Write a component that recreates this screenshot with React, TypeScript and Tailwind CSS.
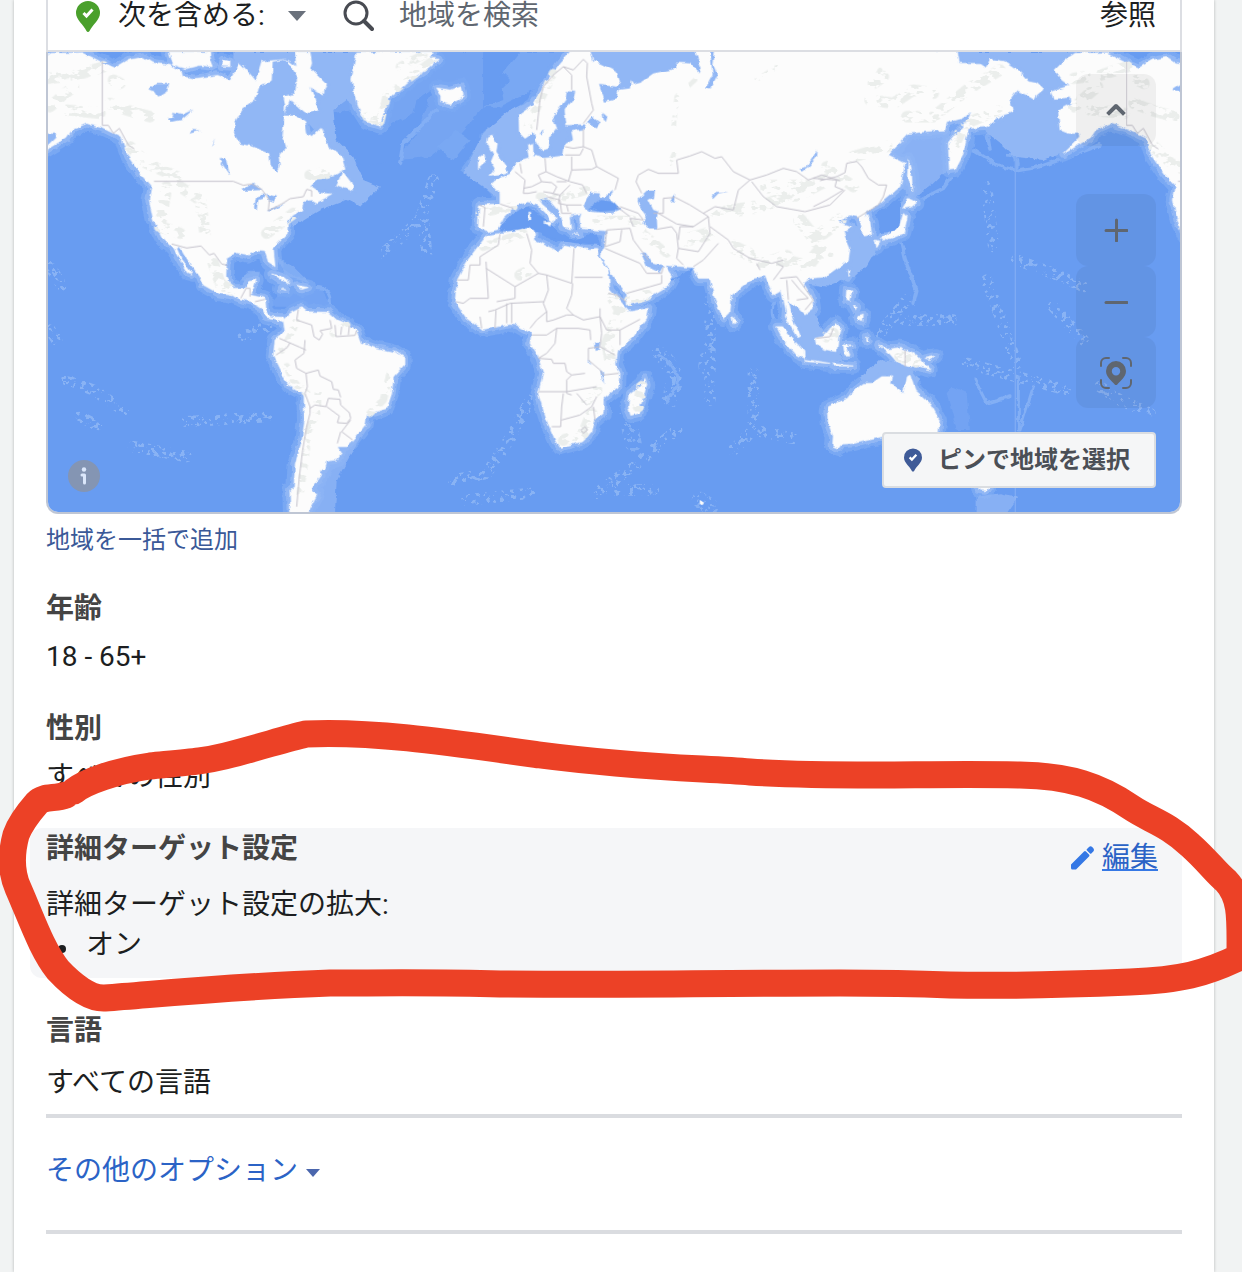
import { useState } from "react";

// Map units are a third of a pixel; one full turn of the globe is 3072 units.
const WORLD_WIDTH = 3072;

const MapShapes = () => (
  <defs>
    <filter id="rough" x="-5%" y="-5%" width="110%" height="110%">
      <feTurbulence type="fractalNoise" baseFrequency="0.045" numOctaves="3" seed="4" result="noise" />
      <feDisplacementMap in="SourceGraphic" in2="noise" scale="14" xChannelSelector="R" yChannelSelector="G" />
    </filter>
    <filter id="speckle" x="-5%" y="-5%" width="110%" height="110%">
      <feTurbulence type="fractalNoise" baseFrequency="0.03 0.05" numOctaves="3" seed="11" result="noise" />
      <feColorMatrix in="noise" type="matrix" values="0 0 0 0 0  0 0 0 0 0  0 0 0 0 0  14 0 0 0 -6.9" result="holes" />
      <feComposite in="SourceGraphic" in2="holes" operator="in" />
    </filter>
    <filter id="dots" x="-5%" y="-5%" width="110%" height="110%">
      <feTurbulence type="fractalNoise" baseFrequency="0.07" numOctaves="3" seed="7" result="noise" />
      <feColorMatrix in="noise" type="matrix" values="0 0 0 0 0  0 0 0 0 0  0 0 0 0 0  18 0 0 0 -10.2" result="holes" />
      <feComposite in="SourceGraphic" in2="holes" operator="in" />
    </filter>

    <g id="land" strokeLinejoin="round">
      {/* North and Central America */}
      <path d="M123 180 153 160 248 158 300 184 345 204 385 180 430 172 455 188 510 196 540 212 545 230 585 236 650 226 692 242 708 210 720 190 735 205 767 242 785 185 815 182 860 178 890 200 885 156 930 156 935 190 930 205 980 255 968 285 930 260 955 330 920 340 870 300 850 345 885 345 915 365 920 400 935 412 962 385 985 440 1025 470 1035 505 1000 528 960 530 930 560 960 580 998 582 950 608 935 600 910 605 905 630 880 645 862 665 862 700 820 745 825 800 805 785 795 755 770 752 745 765 710 758 680 775 678 830 700 865 735 865 745 845 768 840 760 865 750 885 795 895 798 930 812 950 850 952 850 965 820 955 800 952 780 920 755 905 725 898 690 885 655 880 610 855 600 830 570 790 540 740 530 745 545 780 576 822 562 818 520 745 485 712 460 660 448 600 455 560 420 520 385 470 365 412 310 385 260 370 215 390 200 412 118 462 170 410 168 400 133 400 108 390 103 330 140 310 138 292 88 295 83 275 138 258 113 240 93 210Z" />
      <path d="M508 156 628 156 632 178 640 200 600 196 560 206 520 195Z M668 180 690 185 690 200 665 198Z M778 280 800 295 822 308 800 320 775 305Z M1010 555 1028 515 1058 555 1056 572Z M940 235 975 250 975 280 950 260Z" />
      {/* Greenland and Iceland */}
      <path d="M1070 156 1055 240 1072 320 1100 365 1140 378 1150 340 1165 290 1185 280 1230 240 1270 215 1315 178 1285 172 1300 156Z M1310 264 1350 270 1385 260 1390 288 1352 314 1325 305 1325 288Z" />
      <path d="M815 822 850 832 870 848 845 842Z M892 856 925 862 905 868Z M842 866 858 870Z" />
      {/* South America */}
      <path d="M850 960 855 995 825 1020 820 1070 845 1120 865 1155 912 1180 914 1260 905 1330 886 1390 882 1460 870 1470 872 1545 918 1545 950 1485 935 1465 965 1425 955 1408 975 1408 980 1383 1010 1380 1025 1360 1012 1340 1040 1340 1060 1320 1095 1275 1100 1245 1160 1225 1175 1180 1180 1130 1212 1095 1212 1072 1190 1058 1130 1045 1082 1028 1070 995 1045 975 1010 960 985 937 920 935 905 923 870 940Z" />
      {/* Eurasia */}
      <path d="M1715 150 1680 190 1640 245 1600 315 1557 345 1558 395 1575 412 1600 395 1612 430 1625 450 1645 445 1650 410 1670 385 1657 350 1695 300 1700 272 1727 275 1720 300 1695 330 1700 375 1760 372 1750 388 1715 395 1720 420 1695 435 1690 468 1630 475 1600 468 1598 430 1585 435 1590 475 1550 488 1530 520 1475 550 1500 580 1500 612 1438 615 1435 680 1462 695 1495 688 1510 655 1545 620 1585 605 1610 612 1640 642 1658 668 1668 652 1625 615 1615 590 1640 592 1678 635 1690 682 1712 690 1708 648 1745 640 1740 655 1742 685 1790 690 1820 692 1815 740 1803 765 1840 830 1880 880 1882 915 1935 900 2000 860 2018 828 1995 795 1980 820 1940 800 1920 755 1938 758 1955 785 1995 796 2050 800 2080 802 2095 835 2130 835 2145 900 2170 955 2190 935 2195 885 2260 835 2295 828 2320 885 2345 870 2358 930 2356 950 2390 1010 2400 1005 2378 960 2362 905 2395 925 2415 945 2440 925 2435 890 2410 850 2430 835 2475 830 2510 805 2545 780 2550 745 2530 700 2555 680 2515 665 2550 645 2578 652 2590 708 2615 705 2610 665 2595 635 2635 615 2700 560 2715 490 2665 465 2725 400 2805 392 2835 390 2840 368 2885 355 2915 337 2900 365 2845 430 2848 510 2865 508 2890 460 2905 385 2960 380 3010 345 3038 335 3028 300 3050 270 3080 285 3105 300 3110 285 3130 268 3110 250 3085 245 3060 215 3015 185 2970 178 2960 205 2940 190 2875 190 2868 150Z" />
      {/* Africa and Madagascar */}
      <path d="M1462 706 1500 700 1585 685 1602 692 1605 720 1675 755 1690 735 1760 748 1790 745 1795 765 1825 815 1830 870 1880 925 1890 935 1945 925 1940 955 1900 1010 1850 1055 1845 1090 1857 1120 1855 1160 1810 1195 1810 1240 1785 1260 1775 1295 1745 1325 1680 1342 1668 1325 1640 1260 1615 1180 1630 1120 1615 1070 1590 1030 1595 1000 1550 975 1530 973 1445 988 1400 955 1365 905 1372 840 1400 785 1430 745Z M1935 1135 1940 1155 1915 1240 1892 1246 1885 1220 1890 1180 1920 1160Z" />
      {/* British Isles and Mediterranean islands */}
      <path d="M1465 410 1480 405 1478 425 1492 430 1488 455 1520 500 1518 518 1470 526 1485 508 1472 488 1482 465 1462 432Z M1435 475 1452 462 1458 485 1435 506Z M1586 640 1592 640 1592 658 1586 658Z M1630 668 1655 666 1650 678Z M1720 702 1738 702Z" />
      {/* Japan, Sakhalin, Taiwan, Philippines */}
      <path d="M2725 595 2750 608 2732 622 2708 625Z M2710 640 2722 652 2710 700 2675 715 2640 716 2665 700 2698 682Z M2625 720 2640 724 2630 740Z M2645 718 2660 716 2652 724Z M2725 480 2735 530 2738 575 2722 530Z M2542 815 2550 812 2544 830Z M2540 870 2555 875 2550 905 2538 900Z M2570 950 2590 945 2588 965 2572 960Z M2560 915 2572 920 2568 930Z" />
      {/* South-east Asia and New Guinea */}
      <path d="M2330 980 2345 980 2412 1055 2413 1075 2390 1065 2350 1020Z M2415 1078 2490 1090 2415 1084Z M2445 1015 2470 1010 2505 970 2522 985 2515 1010 2510 1055 2480 1050 2450 1035Z M2530 1035 2555 1035 2540 1045 2550 1065 2535 1065Z M2635 1035 2665 1048 2700 1042 2750 1065 2790 1110 2755 1100 2725 1100 2690 1085 2668 1060Z M2500 1092 2560 1098 2500 1098Z M2195 950 2208 960 2200 972Z M2600 1010 2606 1022 2600 1024Z M2775 1075 2805 1068 2790 1078Z" />
      {/* Australia and New Zealand */}
      <path d="M2482 1235 2485 1220 2545 1195 2565 1170 2590 1150 2615 1150 2645 1130 2675 1130 2670 1150 2710 1180 2722 1130 2730 1125 2745 1170 2790 1210 2818 1260 2815 1300 2790 1325 2645 1310 2565 1330 2525 1332 2515 1345 2498 1338 2500 1310 2485 1270Z M2935 1460 2970 1460 2955 1472 2938 1470Z" />
    </g>

    {/* Seas and lakes that lie inside the land outlines */}
    <g id="inland">
      <path d="M705 365 730 325 765 300 780 255 815 245 818 185 860 178 892 230 885 280 850 290 855 315 848 410 858 440 838 465 842 495 832 515 812 500 808 460 760 440 722 430 702 400Z" />
      <path d="M445 268 470 252 508 252 500 275 475 290 465 275Z M500 355 525 352 515 338 545 345 580 328 545 360 515 366Z M565 402 580 390 602 392Z M632 438 645 415 638 432Z M655 475 676 472 690 525 672 500Z M725 572 760 548 790 570 745 572Z M768 590 800 582 790 595 775 600 770 632 762 625Z M800 582 828 590 822 605 805 600Z M800 632 860 608 840 620 812 634Z M545 634 554 640Z" />
      <path d="M1770 150 1780 185 1800 190 1850 215 1860 245 1850 260 1797 255 1815 305 1850 298 1855 270 1890 265 1892 240 1900 252 1925 245 1960 220 2032 205 2030 188 2070 190 2098 220 2105 205 2085 150Z M2130 150 2145 150 2140 195 2152 225 2132 265 2118 262 2138 225Z" />
      <path d="M1760 368 1775 350 1800 368 1790 382 1775 378Z M1805 335 1822 350 1818 365 1808 360Z" />
      <path d="M1750 620 1770 578 1800 580 1798 590 1812 592 1840 572 1830 595 1865 630 1840 640 1770 635Z" />
      <path d="M1912 600 1940 572 1965 572 1962 592 1945 600 1960 630 1975 635 1970 650 1972 685 1945 685 1930 670 1940 650 1918 620Z" />
      <path d="M2398 508 2420 500 2440 470 2450 450 2448 475 2425 500 2408 512Z M2010 602 2018 590 2025 580 2022 605Z M2138 590 2148 576 2185 576 2155 580 2142 594Z" />
      <path d="M1782 1030 1800 1028 1798 1045 1784 1050Z M1800 1110 1808 1115 1812 1150 1806 1140Z M1762 1075 1775 1095 1768 1090Z M1618 402 1630 392 1630 402Z" />
    </g>

    <g id="borders" fill="none" strokeLinejoin="round">
      <path d="M307 184V376L325 376 340 400 358 385 385 435 403 447 M462 544H700L730 556 755 552 785 568 808 600 805 632 845 612 870 596 910 590 920 568 935 572 935 590 M515 732 560 744 603 738 628 765 642 760 665 792 682 796 M722 895 738 865 750 865 750 890 M765 905 795 898" />
      <g transform="translate(0 780)">
        <path d="M895 148 890 180 935 195 942 230 958 240 968 222 960 212 995 205 990 180 M1005 195 1008 230 1065 226 1070 212 M1025 200 1022 225 M1048 198 1045 225 M915 240 912 280 885 300 890 325 918 340 955 330 960 348 995 365 1000 388 1015 390 1022 412 M838 235 900 262 918 270 M828 285 862 262 870 248 M918 340 922 380 915 400 930 440 930 460 920 500 908 570 898 650 890 740 M930 445 945 435 978 440 985 415 1020 418 1022 435 1048 458 1052 475 1040 490 1012 488 1018 468 980 440 M1022 515 1012 550 M1052 480 1025 515 1058 540" />
      </g>
      <g transform="translate(1200 0)">
        <path d="M410 390 420 300 430 260 460 225 490 200 520 210 550 178 562 190 560 230 575 310 580 330 550 370 M490 200 515 225 515 270 M550 388 550 440 520 445 495 440 M550 440 575 450 590 500 655 535 645 570 M515 470 515 510 575 508 590 500 M495 465 540 465 550 445 M515 510 505 545 M435 475 438 515 470 530 510 545 548 555 560 580 M438 515 415 525 425 545 395 560 370 565 M345 515 375 540 370 580 385 580 410 575 M360 490 365 520 M425 545 455 548 470 560 460 580 430 575 M455 580 480 585 510 555 M480 585 475 610 500 615 545 615 M440 590 480 600 485 640 515 640 M238 615 255 622 250 680 M300 612 340 625 M470 545 500 545 M500 615 505 635" />
        <path d="M725 580 708 545 715 525 745 508 775 520 835 520 830 480 870 468 905 455 945 475 965 470 1000 515 1050 540 1015 570 1000 630 945 620 910 640 M790 640 790 595 825 592 870 615 910 640 925 650 880 680 840 680 835 720 M775 640 830 672 880 680 M1050 540 1100 525 1150 505 1190 515 1225 540 1265 525 1320 542 M1055 545 1090 590 1130 620 1215 635 1290 615 1335 570 M660 620 715 640 730 660 690 655 700 680 M620 690 690 685 700 720 745 780 M620 690 615 740 660 725 665 690 M650 620 690 650 M770 688 815 680 830 700 835 745 830 775 850 795 M835 745 895 755 930 700 925 650 M880 800 910 780 955 730 M930 680 985 720 1000 745 1050 775 1115 790 1150 780 M1070 790 1080 810 M760 640 790 640" />
        <path d="M300 702 295 735 240 770 240 795 210 795 205 840 172 840 M258 785 265 895 210 895 M258 805 345 860 345 895 290 905 M345 860 415 820 390 790 395 750 380 700 M415 820 440 825 515 850 522 745 M524 832H608 M440 825 445 870 430 910 440 935 440 965 460 960 500 945 520 945 550 960 600 950 600 925 M518 850 515 885 500 925 520 945 M625 880 650 885 680 905 M600 950 620 990 660 990 720 958 M660 990 660 1035 M600 1040 645 1065 M600 950 605 1000 600 1040 565 1045 565 1080 600 1110 610 1125 655 1120 M395 1005 440 1005 470 985 535 985 570 990 572 1020 M470 985 465 1030 440 1060 415 1075 455 1078 460 1090 495 1090 500 1115 515 1125 500 1140 500 1180 515 1185 M415 1175H500L590 1160 M490 1180 485 1220 482 1280 455 1280 M485 1260 540 1245 575 1220 590 1190 M530 1180 560 1215 M580 1220 585 1260 M543 1290 555 1280 562 1290 550 1300Z M515 1125 555 1120 M335 910 335 970 M320 910 320 970 M288 930 285 985 M240 950 245 985 M210 895 190 910 168 905 M265 935 285 930 330 910 430 905 M440 935 410 960 390 985 M680 880 750 860 785 850 785 825 M615 745 720 790 740 820 785 820 790 800" />
        <path d="M1130 790 1150 800 1120 840 M1140 835 1190 830 1240 900 1215 930 M1160 840 1165 900 M1190 900 1225 895 M1175 840 1200 870 1225 895" />
      </g>
      <path d="M2440 535 2510 540 2505 560 2530 570 2480 600 2440 620 M2460 542 2510 530 2535 518 2540 490 2570 484 2585 500 2605 535 2635 555 2660 555 2650 590 2635 615 2570 655 M2715 1050V1100 M2448 1015 2490 1010 2500 985" />
    </g>

    <g id="relief" fill="none" strokeLinecap="round" strokeLinejoin="round">
      <path strokeWidth="34" d="M150 235 230 225 310 200 M200 330 300 340 M150 320 220 260 M330 310 380 330 450 350 M390 440 440 490 530 530 M500 560 480 680 540 700 M540 560 600 600 615 700 M640 790 660 850 690 870 M800 700 880 640 M930 525 980 520 M340 240 360 250" />
      <path strokeWidth="22" d="M890 960 870 1010 845 1050 M860 1100 885 1150 920 1180 M955 1180 950 1240 925 1290 915 1380 900 1480 M1170 1120 1150 1200 1110 1240 M1040 975 1000 1000" />
      <path strokeWidth="26" d="M1100 350 1140 365 1160 290 1220 240 1300 180 M1270 165 1200 200 M1660 220 1620 300 1580 390 M1620 590 1700 590 1760 570 M1440 640 1540 620 M1450 740 1570 700 M1790 660 1900 660 1930 700 2000 760" />
      <path strokeWidth="14" d="M2085 240 2030 290 2020 390 M2010 490 2025 455 M2270 240 2330 200 M2620 250 2640 210" />
      <path strokeWidth="40" d="M2140 640 2280 620 2400 580 2480 540 M2200 740 2300 790 2360 770 M2350 780 2420 800 2460 750 M2060 720 2130 700 M2300 560 2440 560 M2400 660 2480 760 M2440 720 2520 660" />
      <path strokeWidth="34" d="M2610 300 2680 310 2740 270 2800 280 M2720 350 2800 350 2900 270 3000 210 M2620 250 2650 230 M2560 470 2660 440 M2480 500 2560 560 M2860 440 2880 400 M2900 370 2990 330" />
      <path strokeWidth="34" d="M1835 890 1860 930 1840 980 1820 1030 1830 1080 M1690 1320 1750 1300 1775 1240 M1760 1200 1790 1170 M1925 1160 1915 1220 M1890 900 1940 885 M2700 1070 2750 1085 M1560 825 1580 815 M2480 1010 2500 1000" />
    </g>

    <g id="shelf" strokeLinejoin="round" strokeLinecap="round">
      <path d="M700 156H1080L1060 250 1080 330 1040 300 1000 330 1010 420 1060 470 1090 540 1140 560 1110 590 1080 620 1040 600 960 630 910 660 880 680 860 640 940 560 1020 480 900 340 700 300Z" />
      <path d="M1390 520 1430 440 1450 400 1530 330 1600 300 1720 260 1760 380 1700 500 1540 520 1500 600 1450 560Z" />
      <path d="M60 156H150V440L60 480-30 470-60 440-200 330-230 250-250 156Z" />
      <path d="M2665 465 2725 390 2850 380 2850 500 2800 550 2740 600 2700 560Z" fillOpacity="0.8" />
      <path d="M2515 660 2620 700 2640 730 2600 800 2560 830 2480 860 2420 850 2520 770Z" />
      <path d="M2360 900 2440 930 2470 1000 2530 1080 2420 1085 2340 1000Z M2580 1130 2640 1080 2720 1090 2760 1140 2720 1200 2600 1180Z" />
      <path d="M930 1540 1005 1540 1010 1440 1060 1350 1120 1260 1040 1340 960 1420Z M2930 1540 2930 1490 3000 1480 3055 1490 3020 1540Z" fillOpacity="0.75" />
      <path d="M720 840 745 815 780 815 770 850Z M830 770 880 800 930 850 860 830Z" fillOpacity="0.6" />
    </g>

    {/* Ocean ridges */}
    <g id="ridges" fill="none" strokeLinecap="round" strokeLinejoin="round">
      <path strokeWidth="34" d="M1150 760 1260 660 1300 540 M1270 660 1280 760 M200 1140 280 1170 370 1230 M400 1340 560 1370 M560 1265 800 1250 M730 1010 800 980 M1360 1440 1460 1420 1540 1300 1590 1200 M1400 1500 1590 1480 M1790 1480 1900 1400 2030 1290 M2200 1350 2260 1290 2380 1315 M2260 1120V1280 M1980 1060 2030 1120 2010 1200 M1840 1470 1960 1470 M2130 1200 2130 900 M3050 780 3160 820 3250 860 M2960 840 3000 950 3050 1090 M2960 560 2980 740 M2700 960 2860 960 M2640 1000 2720 900 M3160 920 3250 1020 M3300 1160 3360 1200 3450 1240 M2900 1090 3200 1170 M150 800 185 855 M150 990 170 1020 M240 1250 290 1275" />
      <path strokeWidth="50" d="M1980 1060 2030 1120 2010 1200 M1880 1240 1900 1330 M2120 1080V1100 M2100 1500 2130 1520" strokeOpacity="0.8" />
    </g>
  </defs>
);

const WorldMap = () => (
  <svg viewBox="144 156 3396 1380" preserveAspectRatio="xMidYMid slice" className="block h-[460px] w-full" role="img" aria-label="世界地図">
    <MapShapes />
    <rect x="0" y="0" width="3700" height="1700" fill="#689cf1" />
    <g fill="#79a8f3" filter="url(#rough)">
      <path d="M930 156H1450V320L1380 400 1290 470 1200 480 1250 340 1180 370 1140 410 1080 390 1000 340 960 220Z" fillOpacity="0.8" />
      <path d="M1450 156 1720 156 1600 270 1500 320 1450 320 1530 240Z" />
      <path d="M1310 440 1370 390 1410 420 1360 480Z M1380 510 1440 430 1530 560 1500 600Z" />
      <path d="M800 920 860 850 960 860 1000 930 900 920Z" fillOpacity="0.7" />
      <path d="M2855 1160 2840 1180 2870 1290 2910 1290 2900 1180Z" fillOpacity="0.6" />
    </g>
    <path d="M1450 156 1560 156 1500 230 1510 300 1450 320Z M1000 340 1060 330 1130 400 1240 340 1250 300 1300 260 1250 400 1190 480 1090 500 1010 420Z" fill="#689cf1" filter="url(#rough)" />
    <g filter="url(#dots)" stroke="#9cc0f7" opacity="0.65">
      <use href="#ridges" />
    </g>
    <g fill="none" stroke="#83aff5" strokeLinecap="round" strokeWidth="11" filter="url(#rough)">
      <path d="M2920 450 2990 495 3050 512 3120 500 3220 465 3300 435 M3022 465Q3055 460 3050 500 M2740 610 2830 565 2870 510 M2700 715 2715 780 2750 870 2740 910 M2960 390 2970 450" />
      <path d="M1975 1065Q2040 1100 2030 1160L2000 1205 M930 865Q1000 850 990 930 M2925 1140 2960 1210 3030 1190 M3055 1130V1290 M3100 1160 3060 1290 M2330 890Q2290 960 2370 1010L2430 1080" strokeWidth="9" />
      <path d="M1200 490 1210 430 1260 380 1310 330" strokeWidth="12" />
    </g>
    <path d="M3046 200V1540" stroke="#7fabf4" strokeWidth="4" />

    <g filter="url(#rough)">
      {[0, WORLD_WIDTH].map((x) => (
        <use key={x} href="#land" x={x} fill="none" stroke="#79a8f3" strokeWidth="46" />
      ))}
      {[0, WORLD_WIDTH].map((x) => (
        <use key={x} href="#shelf" x={x} fill="#91b7f5" />
      ))}
      {[0, WORLD_WIDTH].map((x) => (
        <use key={x} href="#land" x={x} fill="none" stroke="#91b7f5" strokeWidth="24" />
      ))}
      <path d="M1490 690 1540 640 1580 620 1640 660 1680 700 1720 720 1790 700 1800 735 1690 725 1620 700Z" fill="#689cf1" />
      <path d="M2630 640 2700 600 2700 690 2640 700Z M2080 806 2070 825 1990 850Z" fill="#689cf1" />
    </g>
    <g filter="url(#rough)">
      {[0, WORLD_WIDTH].map((x) => (
        <use key={x} href="#land" x={x} fill="#fcfcfc" stroke="#fcfcfc" strokeWidth="2" />
      ))}
      {[0, WORLD_WIDTH].map((x) => (
        <use key={x} href="#inland" x={x} fill="#91b7f5" />
      ))}
      <path d="M1765 625 1800 600 1840 605 1862 630 1800 635Z" fill="#689cf1" />
    </g>
    <g filter="url(#speckle)" stroke="#ebeeec">
      <use href="#relief" />
      <use href="#relief" x={WORLD_WIDTH} />
    </g>
    <g stroke="#c3c1cb" strokeWidth="3">
      <use href="#borders" />
      <use href="#borders" x={WORLD_WIDTH} />
    </g>
    <path d="M2099 1500 2104 1503 2112 1508 2106 1516 2100 1512Z" fill="#fcfcfc" />
  </svg>
);

const mapButton = "flex w-20 items-center justify-center rounded-xl bg-black/5 text-[#5f6670]";

const MapControls = () => (
  <div className="absolute top-[22px] right-6 flex flex-col">
    <button type="button" aria-label="閉じる" className={`${mapButton} mb-12 h-[72px]`}>
      <svg width="20" height="14" viewBox="0 0 20 14" fill="none" stroke="currentColor" strokeWidth="4" strokeLinecap="square" strokeLinejoin="round">
        <path d="M3 10l7-7 7 7" />
      </svg>
    </button>
    <button type="button" aria-label="拡大" className={`${mapButton} h-[72px]`}>
      <svg width="24" height="24" viewBox="0 0 24 24" fill="none" stroke="currentColor" strokeWidth="3" strokeLinecap="round">
        <path d="M12.500 2v21M2 12.500h21" />
      </svg>
    </button>
    <button type="button" aria-label="縮小" className={`${mapButton} h-[71px]`}>
      <svg width="24" height="24" viewBox="0 0 24 24" fill="none" stroke="currentColor" strokeWidth="3" strokeLinecap="round">
        <path d="M2 12.500h21" />
      </svg>
    </button>
    <button type="button" aria-label="現在地" className={`${mapButton} h-[71px]`}>
      <svg width="32" height="32" viewBox="0 0 32 32">
        <g fill="none" stroke="currentColor" strokeWidth="2" strokeLinecap="round">
          <path d="M1 9V6a5 5 0 0 1 5-5h3M23 1h3a5 5 0 0 1 5 5v3M31 23v3a5 5 0 0 1-5 5h-3M9 31H6a5 5 0 0 1-5-5v-3" />
        </g>
        <path fill="currentColor" fillRule="evenodd" d="M16 4a10 10 0 0 0-10 10c0 6 6 10 8.500 13.200a2 2 0 0 0 3 0C20 24 26 20 26 14A10 10 0 0 0 16 4zm0 6a4.200 4.200 0 1 1 0 8.400 4.200 4.200 0 0 1 0-8.400z" />
      </svg>
    </button>
  </div>
);

const PinIcon = ({ className }: { className: string }) => (
  <svg viewBox="0 0 24 31" className={className}>
    <path fill="currentColor" d="M12 0A12 12 0 0 0 0 12c0 7 7.500 11.500 10.500 18a1.700 1.700 0 0 0 3 0C16.500 23.500 24 19 24 12A12 12 0 0 0 12 0z" />
    <path d="M7.500 12l3 3L16.500 8.500" fill="none" stroke="#fff" strokeWidth="3" />
  </svg>
);

const Heading = ({ children }: { children: string }) => (
  <h3 className="text-[28px] leading-10 font-bold text-[#444444]">{children}</h3>
);

const App = () => {
  const [query, setQuery] = useState("");

  return (
    <div className="relative min-h-screen overflow-hidden bg-[#f1f3f3] pr-7 pl-3.5 font-[Roboto,'Noto_Sans_CJK_JP',sans-serif] text-[28px] leading-10 text-[#1c1e21]">
      <main className="min-h-screen bg-white px-8 shadow-[0_0_3px_rgba(0,0,0,0.25)]">
        <div className="flex h-[52px] items-center border-x-2 border-b-2 border-[#dcdee3] pr-6 pb-[18px] pl-7">
          <PinIcon className="h-[31px] w-6 shrink-0 text-[#4aa02c]" />
          <div className="relative ml-[18px] flex shrink-0 items-center">
            <select aria-label="地域の条件" className="h-8 w-[190px] appearance-none bg-transparent leading-8 outline-none">
              <option>次を含める:</option>
            </select>
            <svg viewBox="0 0 18 10" className="pointer-events-none absolute right-0.5 h-2.5 w-[18px] fill-[#6a717c]">
              <path d="M0 0h18l-9 10z" />
            </svg>
          </div>
          <label htmlFor="region" className="ml-[34px] shrink-0">
            <svg viewBox="0 0 32 32" className="h-8 w-8 fill-none stroke-[#484b52]" aria-label="検索">
              <circle cx="14" cy="13" r="11" strokeWidth="3" />
              <path d="M22 21l8 8" strokeWidth="4" strokeLinecap="round" />
            </svg>
          </label>
          <input
            id="region"
            type="text"
            value={query}
            onChange={(e) => setQuery(e.target.value)}
            placeholder="地域を検索"
            className="ml-[25px] h-8 min-w-0 flex-1 leading-8 outline-none placeholder:text-[#606770]"
          />
          <button type="button" className="shrink-0 leading-8">参照</button>
        </div>

        <div className="relative overflow-hidden rounded-b-xl border-x-2 border-b-2 border-[#bfc6d4]">
          <WorldMap />
          <MapControls />
          <button
            type="button"
            aria-label="情報"
            className="absolute bottom-5 left-5 flex h-8 w-8 items-center justify-center rounded-full bg-[#8495b3]"
          >
            <svg viewBox="0 0 10 18" className="h-[18px] w-2.5 text-[#dbe7fb]">
              <circle cx="5" cy="2.500" r="2.200" fill="currentColor" />
              <path d="M3 8h2.500v8" fill="none" stroke="currentColor" strokeWidth="3" strokeLinecap="round" strokeLinejoin="round" />
            </svg>
          </button>
          <button
            type="button"
            className="absolute right-6 bottom-6 flex h-14 items-center rounded border-2 border-[#dadde1] bg-[#f5f6f7] pr-6 pl-5 text-2xl font-bold text-[#4b4f56]"
          >
            <PinIcon className="mr-4 h-6 w-[18px] text-[#3f5b98]" />
            ピンで地域を選択
          </button>
        </div>

        <a href="#bulk" className="mt-2 block text-2xl leading-9 text-[#3b5998]">地域を一括で追加</a>

        <section className="mt-[31px]">
          <Heading>年齢</Heading>
          <p className="mt-2">18 - 65+</p>
        </section>

        <section className="mt-8">
          <Heading>性別</Heading>
          <p className="mt-2">すべての性別</p>
        </section>

        <section className="mt-[31px] -ml-4 flex items-start justify-between rounded-l-xl bg-[#f5f6f8] pt-px pr-6 pb-[13px] pl-4">
          <div>
            <Heading>詳細ターゲット設定</Heading>
            <p className="mt-4">詳細ターゲット設定の拡大:</p>
            <ul>
              <li className="flex items-center pl-3 before:mt-2 before:mr-5 before:size-2 before:rounded-full before:bg-[#1c1e21]">
                オン
              </li>
            </ul>
          </div>
          <a href="#edit" className="mt-[9px] flex items-center gap-2 text-[#2b63c6]">
            <svg viewBox="0 0 24 24" className="h-6 w-6 fill-[#3578e5]">
              <path d="M1 18.500 14 5.500a1.500 1.500 0 0 1 2 0L19 8.500a1.500 1.500 0 0 1 0 2L6 23.500H2.500A1.500 1.500 0 0 1 1 22zM17 3l2-2a2.500 2.500 0 0 1 3.200 0l1.100 1.300a2.500 2.500 0 0 1 0 3.200l-2 2a1 1 0 0 1-1.300 0L17 4.500a1 1 0 0 1 0-1.500z" />
            </svg>
            <span className="underline decoration-[#3578e5] decoration-2 underline-offset-2">編集</span>
          </a>
        </section>

        <section className="mt-[33px]">
          <Heading>言語</Heading>
          <p className="mt-3">すべての言語</p>
        </section>

        <hr className="mt-[11px] border-t-4 border-[#dadce0]" />
        <button type="button" className="mt-[33px] flex items-center gap-2 text-[#2b63c6]">
          その他のオプション
          <svg viewBox="0 0 14 8" className="mt-1 h-2 w-3.5 fill-[#4a66ad]">
            <path d="M0 0h14L7 8z" />
          </svg>
        </button>
        <hr className="mt-[39px] border-t-4 border-[#dadce0]" />
      </main>

      {/* Marker stroke drawn over the page */}
      <svg
        viewBox="0 700 1242 330"
        preserveAspectRatio="none"
        className="pointer-events-none absolute top-[700px] left-0 h-[330px] w-full fill-none stroke-[#ec4126]"
        aria-hidden="true"
      >
        <path
          strokeWidth="27"
          strokeLinecap="round"
          strokeLinejoin="round"
          d="M74 791C85 782 115 771 150 766C190 762 205 761 225 756C260 747 285 739 306 734C370 731 440 741 540 755C640 768 700 768 750 772C840 778 930 773 1020 775C1070 776 1100 786 1132 808C1150 820 1168 824 1190 845C1208 861 1215 872 1226 881C1242 898 1240 920 1240 957C1205 974 1180 980 1130 982C1080 984 1000 986 950 985C900 983 870 983 840 983C720 983 600 985 500 984C440 982 380 983 330 983C240 986 170 993 105 998C90 999 72 985 58 970C42 950 32 920 18 888C10 870 12 850 16 835C20 824 30 811 37 803C43 796 55 799 66 795"
        />
      </svg>
    </div>
  );
};

export default App;
